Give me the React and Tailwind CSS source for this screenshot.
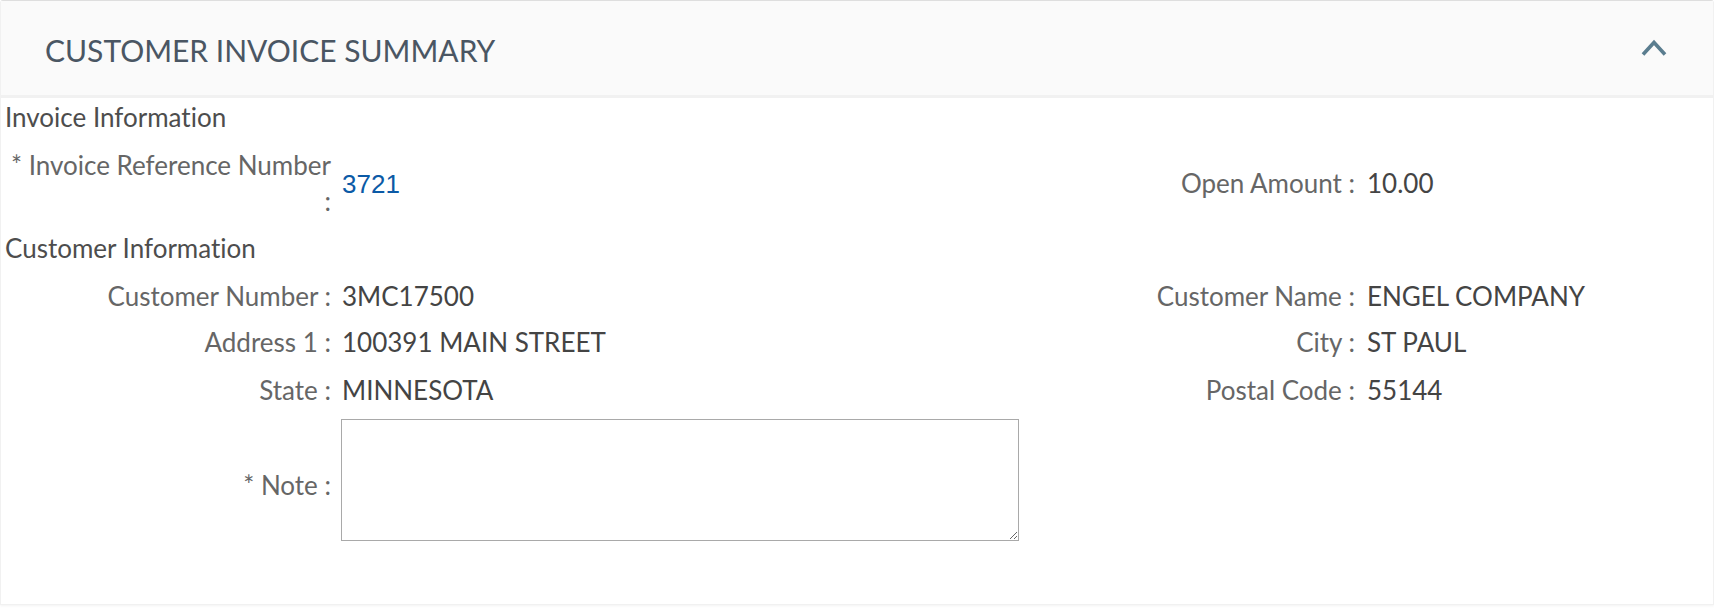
import React from 'react';

function Row({ label, value, rightLabel, rightValue, className = '' }) {
  return (
    <div className={`flex items-center leading-[36px] ${className}`}>
      <div className="w-[1025px] flex items-center shrink-0">
        <div className="w-[326px] text-right text-[#666666] shrink-0">{label}</div>
        <div className="pl-[11px] text-[#444444]">{value}</div>
      </div>
      {rightLabel && (
        <div className="flex items-center">
          <div className="w-[325px] text-right text-[#666666] shrink-0">{rightLabel}</div>
          <div className="pl-[12px] text-[#444444]">{rightValue}</div>
        </div>
      )}
    </div>
  );
}

export default function App() {
  return (
    <div className="w-[1714px] h-[608px] bg-white font-['Lato',sans-serif] text-[26px] [font-variant-ligatures:none]">
      <div className="h-[605px] border border-[#f1f1f1] border-t-[#dedede] rounded-t-[3px] shadow-[0_1px_3px_rgba(0,0,0,0.05)]">
        {/* header */}
        <div className="h-[97px] bg-[#fafafa] border-b-[3px] border-[#f1f1f1] flex items-center justify-between pl-[44px] pr-[46px]">
          <h1 className="text-[30px] text-[#4a5663] pt-[3px] leading-none">CUSTOMER INVOICE SUMMARY</h1>
          <svg width="26" height="18" viewBox="0 0 26 18" className="mt-[-1px]">
            <polyline points="2,15.5 13,3.5 24,15.5" fill="none" stroke="#5a7d8f" strokeWidth="3.6" />
          </svg>
        </div>

        <div className="pl-[4px]">
          <div className="mt-[1px] leading-[36px] text-[#4d4d4d]">Invoice Information</div>

          <Row
            className="mt-[12px]"
            label={<>* Invoice Reference Number<br />:</>}
            value={<a href="#" className="font-['Liberation_Sans',Arial,sans-serif] text-[26px] text-[#0b5aa6]">3721</a>}
            rightLabel="Open Amount :"
            rightValue="10.00"
          />

          <div className="mt-[11px] leading-[36px] text-[#4d4d4d]">Customer Information</div>

          <Row className="mt-[12px]" label="Customer Number :" value="3MC17500" rightLabel="Customer Name :" rightValue="ENGEL COMPANY" />
          <Row className="mt-[10px]" label="Address 1 :" value="100391 MAIN STREET" rightLabel="City :" rightValue="ST PAUL" />
          <Row className="mt-[12px]" label="State :" value="MINNESOTA" rightLabel="Postal Code :" rightValue="55144" />

          <div className="mt-[11px] flex items-center">
            <div className="w-[326px] text-right text-[#666666] leading-[36px] pt-[9px]">* Note :</div>
            <div className="pl-[10px]">
              <textarea className="block w-[678px] h-[122px] border border-[#a9a9a9] bg-white outline-none" />
            </div>
          </div>
        </div>
      </div>
    </div>
  );
}
